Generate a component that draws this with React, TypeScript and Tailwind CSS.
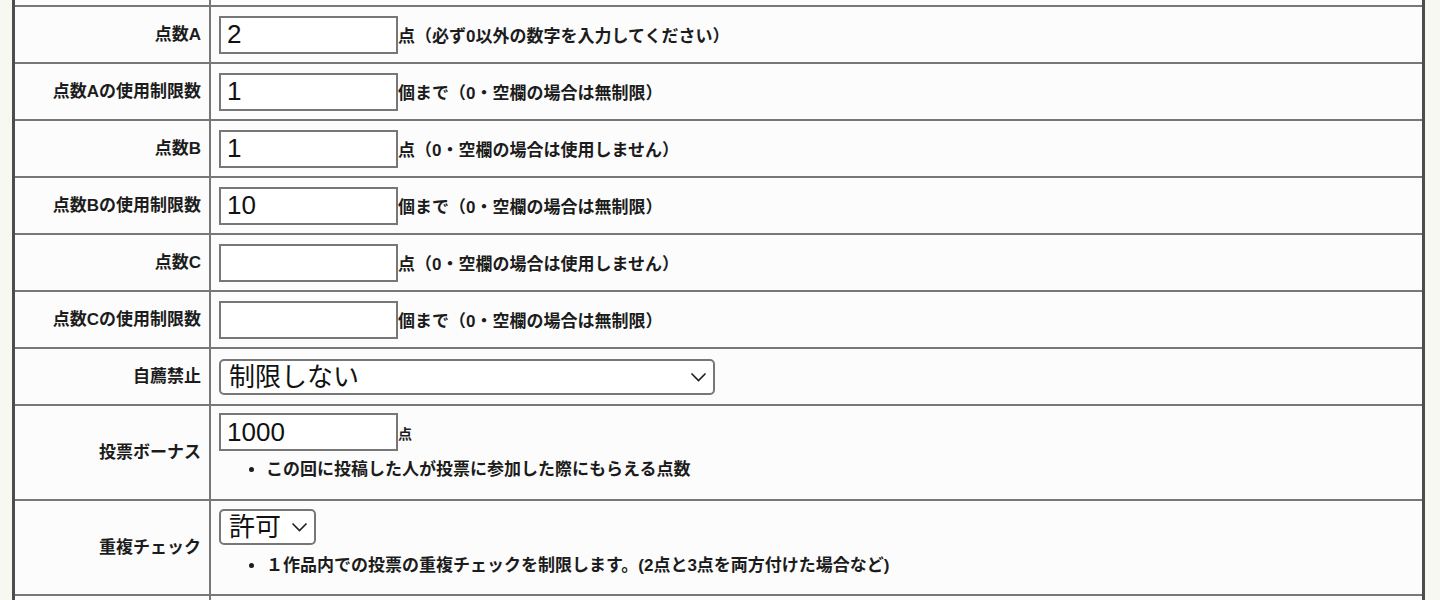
import React from 'react'

const jp = { fontFamily: '"Liberation Sans", "Noto Sans CJK JP", sans-serif' }

const numberRows = [
	{ label: '点数A', value: '2', note: '点（必ず0以外の数字を入力してください）' },
	{ label: '点数Aの使用制限数', value: '1', note: '個まで（0・空欄の場合は無制限）' },
	{ label: '点数B', value: '1', note: '点（0・空欄の場合は使用しません）' },
	{ label: '点数Bの使用制限数', value: '10', note: '個まで（0・空欄の場合は無制限）' },
	{ label: '点数C', value: '', note: '点（0・空欄の場合は使用しません）' },
	{ label: '点数Cの使用制限数', value: '', note: '個まで（0・空欄の場合は無制限）' },
]

function Chevron() {
	return (
		<svg width="17" height="10" viewBox="0 0 17 10" fill="none" aria-hidden="true">
			<path d="M1.5 1.5 L8.5 8.5 L15.5 1.5" stroke="#1f1f1f" strokeWidth="1.6" />
		</svg>
	)
}

function Select({ value, width }: { value: string; width: string }) {
	return (
		<div className={`relative h-[36px] ${width}`}>
			<select
				defaultValue={value}
				className="h-full w-full appearance-none rounded-[5px] border-2 border-[#777] bg-white pl-[8px] text-[26px] leading-none text-[#111] outline-none"
				style={jp}
			>
				<option>{value}</option>
			</select>
			<span className="pointer-events-none absolute right-[8px] top-[13px]">
				<Chevron />
			</span>
		</div>
	)
}

function NumberInput({ value }: { value: string }) {
	return (
		<input
			type="text"
			defaultValue={value}
			className="h-[38px] w-[179px] border-2 border-[#777] bg-white pl-[6px] text-[26px] leading-none text-[#111] outline-none"
			style={{ fontFamily: '"Liberation Sans", Arial, sans-serif' }}
		/>
	)
}

function Row({ label, children, tall }: { label: string; children: React.ReactNode; tall?: string }) {
	return (
		<div className={`flex border-b-2 border-[#777] ${tall ? 'h-[95px]' : 'h-[57px]'}`}>
			<div className="flex w-[196px] shrink-0 items-center justify-end border-r-2 border-[#777] pr-[8px] text-[17px] font-bold text-[#1c1c1c]">
				{label}
			</div>
			<div className={`flex flex-1 flex-col pl-[8px] ${tall ? tall : 'justify-center'}`}>{children}</div>
		</div>
	)
}

export default function App() {
	return (
		<div className="h-[600px] overflow-hidden bg-[#f8f8f3] pl-[12px] pr-[15px]" style={jp}>
			<div className="border-x-[3px] border-[#4d4d4d] bg-[#fcfcfc]">
				<div className="flex h-[7px] border-b-2 border-[#777]">
					<div className="w-[196px] border-r-2 border-[#777]" />
				</div>

				{numberRows.map((r) => (
					<Row key={r.label} label={r.label}>
						<div className="flex items-baseline">
							<NumberInput value={r.value} />
							<span className="relative -top-[1px] text-[17px] font-bold text-[#1c1c1c]">{r.note}</span>
						</div>
					</Row>
				))}

				<Row label="自薦禁止">
					<Select value="制限しない" width="w-[496px]" />
				</Row>

				<Row label="投票ボーナス" tall="pt-[7px]">
					<div className="flex items-baseline">
						<NumberInput value="1000" />
						<span className="relative -top-[2px] text-[14px] font-bold text-[#1c1c1c]">点</span>
					</div>
					<ul className="mt-[7px] list-disc pl-[47px] text-[17px] font-bold leading-[24px] text-[#1c1c1c]">
						<li>この回に投稿した人が投票に参加した際にもらえる点数</li>
					</ul>
				</Row>

				<Row label="重複チェック" tall="pt-[8px]">
					<Select value="許可" width="w-[97px]" />
					<ul className="mt-[9px] list-disc pl-[47px] text-[17px] font-bold leading-[24px] text-[#1c1c1c]">
						<li>１作品内での投票の重複チェックを制限します。(2点と3点を両方付けた場合など)</li>
					</ul>
				</Row>

				<div className="flex h-[40px]">
					<div className="w-[196px] border-r-2 border-[#777]" />
				</div>
			</div>
		</div>
	)
}
